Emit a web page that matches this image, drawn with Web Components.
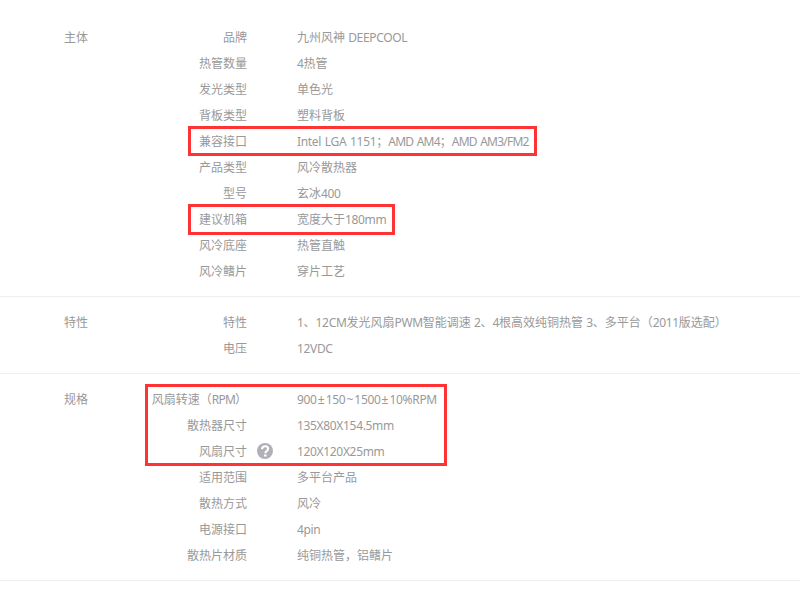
<!DOCTYPE html>
<html lang="zh"><head><meta charset="utf-8"><style>
html,body{margin:0;padding:0;background:#fff}
body{font:12px/26px "Noto Sans","Noto Sans CJK SC",sans-serif;color:#999;width:800px;height:600px;overflow:hidden;position:relative}
spec-list{padding-top:12px}
.l{letter-spacing:-.33px;word-spacing:1px}
.c{letter-spacing:-.76px;word-spacing:1px}
.w{letter-spacing:0;padding:0 1.1px}
</style></head><body>
<spec-list>
<spec-group label="主体">
<spec-row k="品牌">九州风神 <span class="l">DEEPCOOL</span></spec-row>
<spec-row k="热管数量"><span class="l">4</span>热管</spec-row>
<spec-row k="发光类型">单色光</spec-row>
<spec-row k="背板类型">塑料背板</spec-row>
<spec-row k="兼容接口"><span class="l">Intel LGA 1151</span>；<span class="c">AMD AM4</span>；<span class="c">AMD AM3/FM2</span></spec-row>
<spec-row k="产品类型">风冷散热器</spec-row>
<spec-row k="型号">玄冰<span class="l">400</span></spec-row>
<spec-row k="建议机箱">宽度大于<span class="l">180mm</span></spec-row>
<spec-row k="风冷底座">热管直触</spec-row>
<spec-row k="风冷鳍片">穿片工艺</spec-row>
</spec-group>
<spec-group label="特性">
<spec-row k="特性"><span class="l">1</span>、<span class="l">12CM</span>发光风扇<span class="l">PWM</span>智能调速 <span class="l">2</span>、<span class="l">4</span>根高效纯铜热管 <span class="l">3</span>、多平台（<span class="l">2011</span>版选配）</spec-row>
<spec-row k="电压"><span class="l">12VDC</span></spec-row>
</spec-group>
<spec-group label="规格">
<spec-row k="风扇转速（RPM）"><span class="l">900<span class="w">±</span>150<span class="w">~</span>1500<span class="w">±</span>10%RPM</span></spec-row>
<spec-row k="散热器尺寸"><span class="l">135X80X154.5mm</span></spec-row>
<spec-row k="风扇尺寸" help><span class="l">120X120X25mm</span></spec-row>
<spec-row k="适用范围">多平台产品</spec-row>
<spec-row k="散热方式">风冷</spec-row>
<spec-row k="电源接口"><span class="l">4pin</span></spec-row>
<spec-row k="散热片材质">纯铜热管，铝鳍片</spec-row>
</spec-group>
</spec-list>
<red-box style="left:188px;top:126px;width:349px;height:30px"></red-box>
<red-box style="left:188px;top:204px;width:207px;height:31px"></red-box>
<red-box style="left:145px;top:384px;width:302px;height:82px"></red-box>
<script>
class SpecList extends HTMLElement{constructor(){super();this.attachShadow({mode:'open'}).innerHTML='<style>:host{display:block}</style><slot></slot>'}}
class SpecGroup extends HTMLElement{constructor(){super();const s=this.attachShadow({mode:'open'});s.innerHTML=`<style>
:host{display:grid;grid-template-columns:64px 100px 1fr;padding:12px 0;border-bottom:1px solid #eee}
.l{grid-column:2;padding-top:1px}.r{grid-column:3;display:flex;flex-direction:column}
</style><div class="l"></div><div class="r"><slot></slot></div>`}
connectedCallback(){this.shadowRoot.querySelector('.l').textContent=this.getAttribute('label')}}
class SpecRow extends HTMLElement{constructor(){super();const s=this.attachShadow({mode:'open'});s.innerHTML=`<style>
:host{display:flex;height:26px;margin-left:-14px}
.k{box-sizing:border-box;height:26px;padding-top:1px;width:97px;display:flex;justify-content:flex-end;white-space:nowrap;flex:none;position:relative}
.v{box-sizing:border-box;height:26px;padding-top:1px;margin-left:50px;white-space:nowrap}
.n{letter-spacing:-.8px}
svg{position:absolute;left:107px;top:5px}
</style><div class="k"><span></span></div><div class="v"><slot></slot></div>`}
connectedCallback(){const k=this.getAttribute('k').replace(/[A-Z]+/g,m=>'<span class="n">'+m+'</span>');this.shadowRoot.querySelector('span').innerHTML=k;
if(this.hasAttribute('help')){this.shadowRoot.querySelector('.k').insertAdjacentHTML('beforeend','<svg width="16" height="16" viewBox="0 0 16 16"><circle cx="8" cy="8" r="8" fill="#b0b0b8"/><path d="M5 6.100C5.100 4.200 6.500 3.300 8.100 3.300c1.800 0 3 1 3 2.500 0 1.200-.7 1.800-1.500 2.300C8.700 8.700 8.400 9.100 8.400 10.200" fill="none" stroke="#fff" stroke-width="2.100"/><circle cx="8.300" cy="12.500" r="1.300" fill="#fff"/></svg>')}}}
class RedBox extends HTMLElement{constructor(){super();this.attachShadow({mode:'open'}).innerHTML='<style>:host{position:absolute;box-sizing:border-box;border:3px solid #f33;display:block}</style>'}}
customElements.define('spec-list',SpecList);customElements.define('spec-group',SpecGroup);customElements.define('spec-row',SpecRow);customElements.define('red-box',RedBox);
</script>
</body></html>
